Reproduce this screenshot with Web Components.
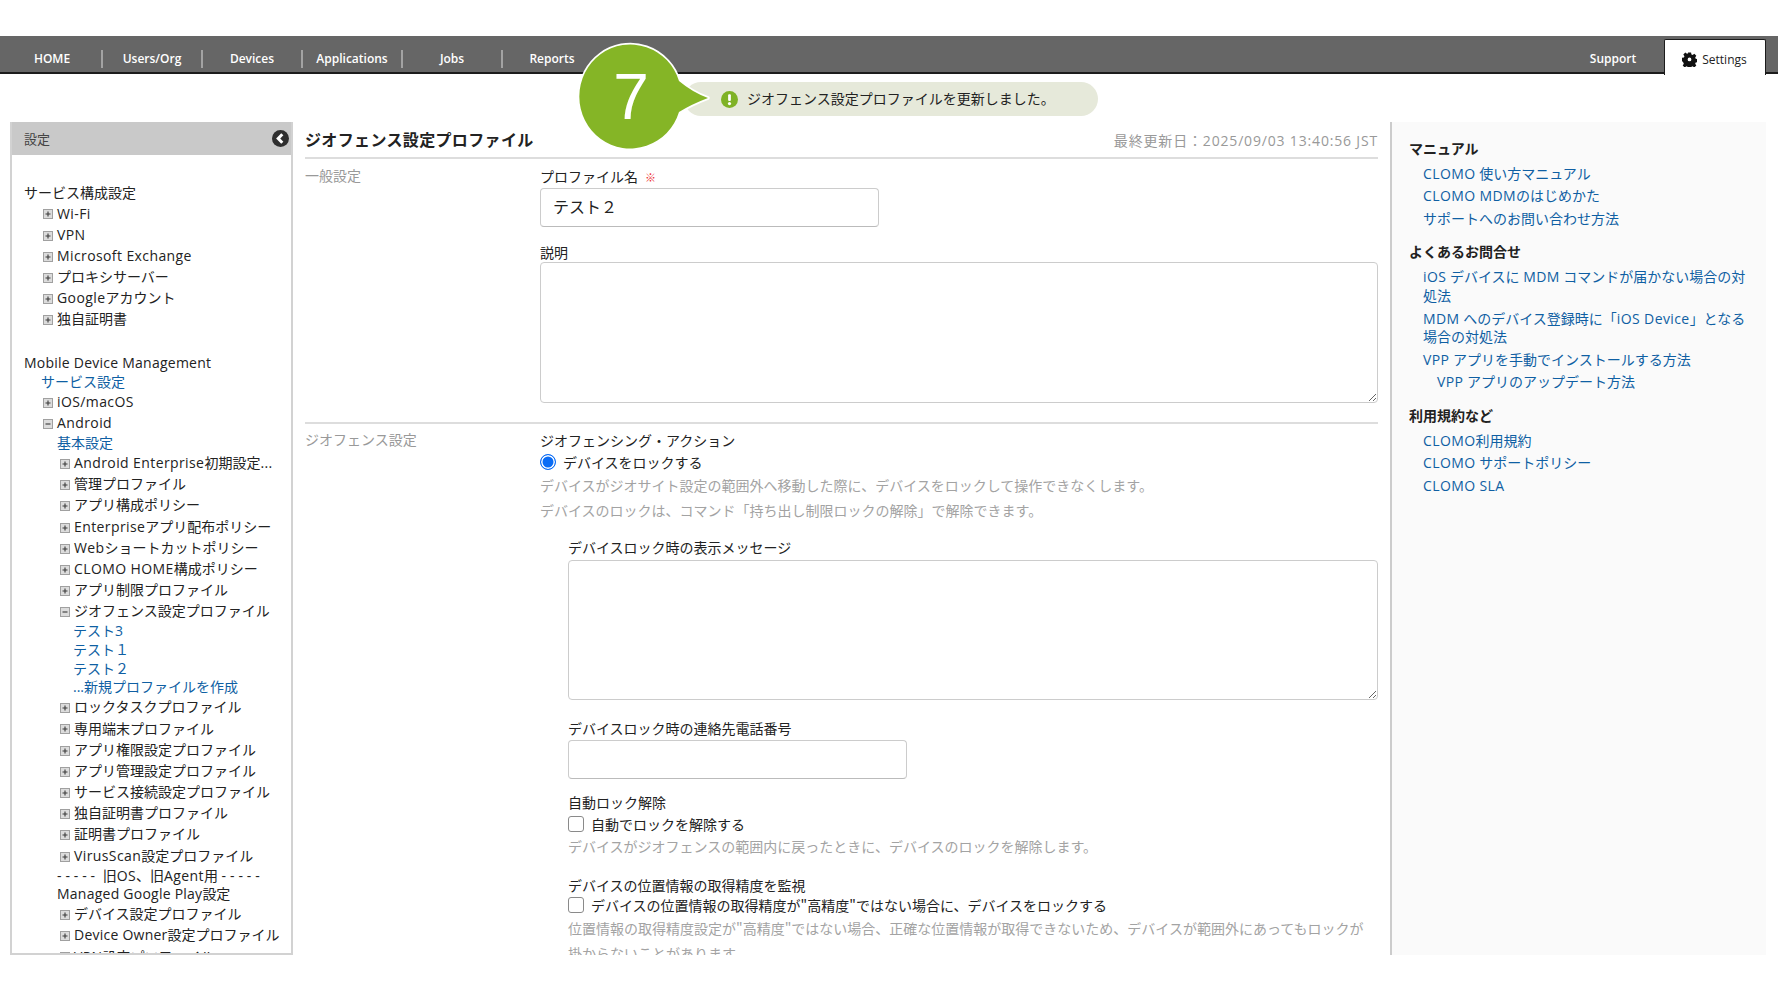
<!DOCTYPE html>
<html lang="ja"><head><meta charset="utf-8"><title>設定</title>
<style>
html,body{margin:0;padding:0;background:#fff}
body{width:1778px;height:1000px;overflow:hidden;font:14px/18.7px "Open Sans","Noto Sans CJK JP",sans-serif;color:#222}
.l{letter-spacing:.4px}
.n{letter-spacing:.24px}
.d{letter-spacing:3.9px}
</style></head><body>
<clomo-app>
  <app-nav slot="nav">
    <nav-tab>HOME</nav-tab><nav-tab>Users/Org</nav-tab><nav-tab>Devices</nav-tab><nav-tab>Applications</nav-tab><nav-tab>Jobs</nav-tab><nav-tab last>Reports</nav-tab>
  </app-nav>
  <notice-pill slot="notice">ジオフェンス設定プロファイルを更新しました。</notice-pill>
  <step-balloon slot="balloon">7</step-balloon>
  <side-tree slot="side" title-text="設定">
    <tree-row indent="12" gap="1">サービス構成設定</tree-row>
    <tree-row indent="31" icon="plus"><span class="l">Wi-Fi</span></tree-row>
    <tree-row indent="31" icon="plus"><span class="l">VPN</span></tree-row>
    <tree-row indent="31" icon="plus"><span class="l">Microsoft Exchange</span></tree-row>
    <tree-row indent="31" icon="plus">プロキシサーバー</tree-row>
    <tree-row indent="31" icon="plus"><span class="l">Google</span>アカウント</tree-row>
    <tree-row indent="31" icon="plus" gap="24">独自証明書</tree-row>
    <tree-row indent="12"><span class="n">Mobile Device Management</span></tree-row>
    <tree-row indent="29" link>サービス設定</tree-row>
    <tree-row indent="31" icon="plus"><span class="l">iOS/macOS</span></tree-row>
    <tree-row indent="31" icon="minus"><span class="l">Android</span></tree-row>
    <tree-row indent="45" link>基本設定</tree-row>
    <tree-row indent="48" icon="plus"><span class="l">Android Enterprise</span>初期設定<span class="l">...</span></tree-row>
    <tree-row indent="48" icon="plus">管理プロファイル</tree-row>
    <tree-row indent="48" icon="plus">アプリ構成ポリシー</tree-row>
    <tree-row indent="48" icon="plus"><span class="l">Enterprise</span>アプリ配布ポリシー</tree-row>
    <tree-row indent="48" icon="plus"><span class="l">Web</span>ショートカットポリシー</tree-row>
    <tree-row indent="48" icon="plus"><span class="l">CLOMO HOME</span>構成ポリシー</tree-row>
    <tree-row indent="48" icon="plus">アプリ制限プロファイル</tree-row>
    <tree-row indent="48" icon="minus">ジオフェンス設定プロファイル</tree-row>
    <tree-row indent="61" link>テスト3</tree-row>
    <tree-row indent="61" link>テスト１</tree-row>
    <tree-row indent="61" link>テスト２</tree-row>
    <tree-row indent="61" link>...新規プロファイルを作成</tree-row>
    <tree-row indent="48" icon="plus">ロックタスクプロファイル</tree-row>
    <tree-row indent="48" icon="plus">専用端末プロファイル</tree-row>
    <tree-row indent="48" icon="plus">アプリ権限設定プロファイル</tree-row>
    <tree-row indent="48" icon="plus">アプリ管理設定プロファイル</tree-row>
    <tree-row indent="48" icon="plus">サービス接続設定プロファイル</tree-row>
    <tree-row indent="48" icon="plus">独自証明書プロファイル</tree-row>
    <tree-row indent="48" icon="plus">証明書プロファイル</tree-row>
    <tree-row indent="48" icon="plus"><span class="l">VirusScan</span>設定プロファイル</tree-row>
    <tree-row indent="45"><span class="d">-----</span> 旧<span class="l">OS</span>、旧<span class="l">Agent</span>用 <span class="d">-----</span></tree-row>
    <tree-row indent="45"><span class="n">Managed Google Play</span>設定</tree-row>
    <tree-row indent="48" icon="plus">デバイス設定プロファイル</tree-row>
    <tree-row indent="48" icon="plus"><span class="n">Device Owner</span>設定プロファイル</tree-row>
    <tree-row indent="48" icon="plus"><span class="l">VPN</span>設定プロファイル</tree-row>
  </side-tree>
  <main-form slot="main" heading="ジオフェンス設定プロファイル" updated="最終更新日：2025/09/03 13:40:56 JST">
    <form-section label="一般設定">
      <form-label>プロファイル名<span style="color:#e33;font-size:11px;font-weight:700;margin-left:7px">※</span></form-label>
      <text-box width="339" value="テスト２"></text-box>
      <form-label top="15">説明</form-label>
      <area-box height="141"></area-box>
    </form-section>
    <form-section label="ジオフェンス設定" rule>
      <form-label>ジオフェンシング・アクション</form-label>
      <check-row type="radio" top="1" tall>デバイスをロックする</check-row>
      <help-text>デバイスがジオサイト設定の範囲外へ移動した際に、デバイスをロックして操作できなくします。</help-text>
      <help-text>デバイスのロックは、コマンド「持ち出し制限ロックの解除」で解除できます。</help-text>
      <sub-block>
        <form-label top="14" bottom="3">デバイスロック時の表示メッセージ</form-label>
        <area-box height="140"></area-box>
        <form-label top="18" bottom="2">デバイスロック時の連絡先電話番号</form-label>
        <text-box width="339" value=""></text-box>
        <form-label top="13">自動ロック解除</form-label>
        <check-row type="checkbox" top="1">自動でロックを解除する</check-row>
        <help-text>デバイスがジオフェンスの範囲内に戻ったときに、デバイスのロックを解除します。</help-text>
        <form-label top="16">デバイスの位置情報の取得精度を監視</form-label>
        <check-row type="checkbox" top="-1" tall>デバイスの位置情報の取得精度が"高精度"ではない場合に、デバイスをロックする</check-row>
        <help-text>位置情報の取得精度設定が"高精度"ではない場合、正確な位置情報が取得できないため、デバイスが範囲外にあってもロックが<br>掛からないことがあります。</help-text>
      </sub-block>
    </form-section>
  </main-form>
  <help-panel slot="help">
    <help-head first>マニュアル</help-head>
    <help-link><span class="l">CLOMO</span> 使い方マニュアル</help-link>
    <help-link><span class="l">CLOMO MDM</span>のはじめかた</help-link>
    <help-link>サポートへのお問い合わせ方法</help-link>
    <help-head>よくあるお問合せ</help-head>
    <help-link><span class="l">iOS</span> デバイスに <span class="l">MDM</span> コマンドが届かない場合の対<br>処法</help-link>
    <help-link><span class="l">MDM</span> へのデバイス登録時に「<span class="l">iOS Device</span>」となる<br>場合の対処法</help-link>
    <help-link><span class="l">VPP</span> アプリを手動でインストールする方法</help-link>
    <help-link sub><span class="l">VPP</span> アプリのアップデート方法</help-link>
    <help-head>利用規約など</help-head>
    <help-link><span class="l">CLOMO</span>利用規約</help-link>
    <help-link><span class="l">CLOMO</span> サポートポリシー</help-link>
    <help-link><span class="l">CLOMO SLA</span></help-link>
  </help-panel>
</clomo-app>
<script>
const def=(name,css,html,init)=>{customElements.define(name,class extends HTMLElement{
  connectedCallback(){ if(this.shadowRoot) return;
    const r=this.attachShadow({mode:'open'});
    r.innerHTML='<style>'+css+'</style>'+(typeof html==='function'?html(this):html);
    if(init) init(this,r);
  }});};
const attr=(e,n,d='')=>e.hasAttribute(n)?e.getAttribute(n):d;
const spacing=e=>{if(e.hasAttribute('top'))e.style.marginTop=attr(e,'top')+'px';if(e.hasAttribute('bottom'))e.style.marginBottom=attr(e,'bottom')+'px';};

def('clomo-app',`:host{display:block;position:relative;width:1778px;height:1000px;padding-top:36px;box-sizing:border-box}
.cols{display:flex;padding-left:10px;height:833px;gap:12px}
.m{width:1073px;flex:none}.h{width:376px;flex:none}.s{width:283px;flex:none}
.top{height:48px;box-sizing:border-box;padding-top:8px}`,
`<slot name="nav"></slot><div class="top"><slot name="notice"></slot></div>
<div class="cols"><div class="s"><slot name="side"></slot></div><div class="m"><slot name="main"></slot></div><div class="h"><slot name="help"></slot></div></div><slot name="balloon"></slot>`);

def('app-nav',`:host{display:flex;height:38px;box-sizing:border-box;background:#666;border-bottom:2px solid #1c1c1c;padding-left:2px;align-items:stretch}
.sp{flex:1}
.sup{width:100px;display:flex;align-items:center;justify-content:center;color:#fff;font:600 12px "Open Sans",sans-serif;margin-right:1px;padding-top:8px;box-sizing:border-box}
.set{width:102px;height:36px;margin-top:3px;margin-right:12px;box-sizing:border-box;background:#fff;border:1px solid #1c1c1c;border-bottom:0;border-radius:2px 2px 0 0;display:flex;align-items:center;justify-content:center;gap:5px;font:500 12px "Open Sans",sans-serif;color:#222;padding-top:4px}
svg{display:block;margin-left:-1px}`,
`<slot></slot><div class="sp"></div><div class="sup">Support</div>
<div class="set"><svg width="15" height="15" viewBox="0 0 24 24"><path fill="#111" fill-rule="evenodd" d="M9.500 1h5l.6 3.100 1.900.8 2.700-1.800 3.200 3.200-1.800 2.700.8 1.900 3.100.6v5l-3.100.6-.8 1.900 1.800 2.700-3.200 3.200-2.700-1.800-1.900.8-.6 3.100h-5l-.6-3.100-1.900-.8-2.700 1.800-3.200-3.200 1.800-2.700-.8-1.900L0 14.500v-5l3.100-.6.800-1.900-1.800-2.700 3.200-3.200 2.700 1.800 1.900-.8zM12 9a3 3 0 1 0 0 6 3 3 0 0 0 0-6z" transform="translate(0 -.2)"/></svg>Settings</div>`);

def('nav-tab',`:host{display:flex;width:100px;align-items:center;justify-content:center;position:relative;color:#fff;font:600 12px "Open Sans",sans-serif;padding-top:8px;box-sizing:border-box}
i{position:absolute;right:-1px;top:14px;height:18px;width:2px;background:#a3a3a3}`,
e=>'<slot></slot>'+(e.hasAttribute('last')?'':'<i></i>'));

def('notice-pill',`:host{display:flex;align-items:center;box-sizing:border-box;margin:0 0 0 684px;width:414px;height:34px;background:#e6e9da;border-radius:17px;padding-left:37px;gap:9px;font:14px/32px "Noto Sans CJK JP",sans-serif;color:#222}
svg{flex:none}span{position:relative;top:-1px}`,
`<svg width="17" height="17" viewBox="0 0 16 16"><circle cx="8" cy="8" r="8" fill="#7fb226"/><rect x="6.700" y="3" width="2.600" height="6.500" rx="1" fill="#fff"/><circle cx="8" cy="11.800" r="1.500" fill="#fff"/></svg><span><slot></slot></span>`);

def('step-balloon',`:host{display:block;position:absolute;left:570px;top:36px;width:150px;height:122px}
svg{position:absolute;inset:0}
span{position:absolute;left:37px;top:26px;width:48px;text-align:center;font:64px/70px "Liberation Sans",sans-serif;color:#fff}`,
`<svg width="150" height="122" viewBox="570 36 150 122"><path d="M679 81Q692 92 708 98Q692 104 679 112A51 52 0 1 1 679 81Z" fill="#85b526" stroke="#fff" stroke-width="3.500" stroke-linejoin="round" paint-order="stroke"/></svg><span><slot></slot></span>`);

def('side-tree',`:host{display:block;height:833px;box-sizing:border-box;border:2px solid #d2d2d2;border-top:0;overflow:hidden;background:#fff}
.hd{height:33px;margin:0 -2px;background:#c9c9c9;display:flex;align-items:center;justify-content:space-between;padding:0 4px 0 14px;color:#444;font:13px "Noto Sans CJK JP",sans-serif}
.body{padding-top:28.600px}
svg{display:block}`,
e=>`<div class="hd"><span>${attr(e,'title-text')}</span><svg width="17" height="17" viewBox="0 0 17 17"><circle cx="8.500" cy="8.500" r="8.500" fill="#2f2f2f"/><path d="M10.300 4.300 6.200 8.500l4.100 4.200" fill="none" stroke="#fff" stroke-width="3"/></svg></div><div class="body"><slot></slot></div>`);

def('tree-row',`:host{display:flex;align-items:center;white-space:nowrap;box-sizing:border-box;height:18.700px;font:14px/18.700px "Open Sans","Noto Sans CJK JP",sans-serif;color:#222}
:host([icon]){height:21.200px}
:host([link]){color:#0f5fa3}
svg{display:block;flex:none;margin-right:4px;margin-top:1px}`,
e=>{const ic=attr(e,'icon');
  const g=ic?`<svg width="10" height="10" viewBox="0 0 10 10"><rect x=".5" y=".5" width="9" height="9" fill="#dcdcdc" stroke="#a0a0a0"/><path d="M2.500 5h5${ic==='plus'?'M5 2.500v5':''}" stroke="#3a3a3a" stroke-width="1.100"/></svg>`:'';
  return g+'<span><slot></slot></span>';},
(e)=>{e.style.paddingLeft=attr(e,'indent','0')+'px'; if(e.hasAttribute('gap')) e.style.marginBottom=attr(e,'gap')+'px';});

def('main-form',`:host{display:block;height:833px;overflow:hidden}
.hd{display:flex;justify-content:space-between;align-items:center;height:37px;box-sizing:border-box;border-bottom:2px solid #ddd;padding-bottom:1px}
h1{margin:0;font:700 16px "Noto Sans CJK JP",sans-serif;letter-spacing:.35px;color:#222}
.up{font:14px "Open Sans","Noto Sans CJK JP",sans-serif;color:#999;padding-top:2px;letter-spacing:.83px}`,
e=>`<div class="hd"><h1>${attr(e,'heading')}</h1><span class="up">${attr(e,'updated')}</span></div><slot></slot>`);

def('form-section',`:host{display:grid;grid-template-columns:235px 1fr;padding-top:7px}
:host([rule]){border-top:2px solid #ddd;margin-top:19px;padding-top:6px}
.l{color:#999;font:14px/20px "Noto Sans CJK JP",sans-serif;margin-top:-1px}`,
e=>`<div class="l">${attr(e,'label')}</div><div><slot></slot></div>`);

def('form-label',`:host{display:block;font:14px/20px "Noto Sans CJK JP",sans-serif;color:#222}`,`<slot></slot>`,spacing);

def('text-box',`:host{display:block;box-sizing:border-box;height:39px;border:1px solid #ccc;border-bottom-color:#bbb;border-radius:4px;margin:1px 0 0;padding:0 12px;font:16px/35px "Noto Sans CJK JP",sans-serif;color:#222;background:#fff}`,
e=>attr(e,'value'),e=>{e.style.width=attr(e,'width')+'px';});

def('area-box',`:host{display:block}
textarea{display:block;width:100%;box-sizing:border-box;border:1px solid #ccc;border-radius:4px;margin:0;padding:0;background:#fff;outline:0}`,
e=>`<textarea aria-label="text" style="height:${attr(e,'height')}px"></textarea>`);

def('check-row',`:host{display:flex;align-items:center;height:21px;gap:7px;font:14px/20px "Noto Sans CJK JP",sans-serif;color:#222}
:host([tall]){height:22px}
input{appearance:none;margin:0;flex:none;box-sizing:border-box;background:#fff}
input[type=radio]{width:16px;height:16px;border-radius:50%;border:1.500px solid #0a6cf5;box-shadow:inset 0 0 0 1.500px #fff;background:#0a6cf5}
input[type=checkbox]{width:16px;height:16px;border-radius:3px;border:1.500px solid #8a8a8a}`,
e=>`<input type="${attr(e,'type')}" ${attr(e,'type')==='radio'?'checked':''} aria-label="option"><span><slot></slot></span>`,spacing);

def('help-text',`:host{display:block;font:14px/25px "Noto Sans CJK JP",sans-serif;color:#a3a3a3;white-space:nowrap}`,`<slot></slot>`);
def('sub-block',`:host{display:block;padding-left:28px}`,`<slot></slot>`);

def('help-panel',`:host{display:block;height:833px;box-sizing:border-box;background:#fafafa;border-left:2px solid #ccc;padding:16.600px 20px 0 17px}`,`<slot></slot>`);
def('help-head',`:host{display:block;font:700 14px/18.700px "Noto Sans CJK JP",sans-serif;color:#222;margin:14px 0 7.300px}
:host([first]){margin-top:0}`,`<slot></slot>`);
def('help-link',`:host{display:block;font:14px/18.700px "Open Sans","Noto Sans CJK JP",sans-serif;color:#0f5fa3;padding-left:14px;margin-bottom:3.800px}
:host([sub]){padding-left:28px}`,`<slot></slot>`);
</script>
</body></html>
